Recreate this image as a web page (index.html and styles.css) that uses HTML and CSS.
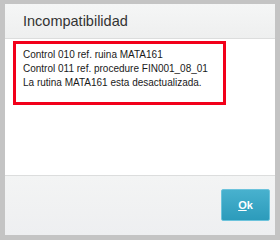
FILE: index.html
```html
<!DOCTYPE html>
<html lang="es">
<head>
  <meta charset="UTF-8" />
  <title>Incompatibilidad</title>
  <link rel="stylesheet" href="styles.css">
</head>
<body>
  <div class="dialog">
    <div class="dialog-header">
      <h1>Incompatibilidad</h1>
    </div>
    <div class="dialog-body">
      <div class="message">
        Control 010 ref. ruina MATA161<br>
        Control 011 ref. procedure FIN001_08_01<br>
        La rutina MATA161 esta desactualizada.
      </div>
    </div>
    <div class="dialog-footer">
      <button class="btn-ok"><u>O</u>k</button>
    </div>
  </div>
</body>
</html>
```

FILE: styles.css
```css
html, body {
  margin: 0;
  padding: 0;
}
body {
  font-family: "Liberation Sans", Arial, sans-serif;
  background: #fff;
}
.dialog {
  width: 280px;
  height: 240px;
  box-sizing: border-box;
  border: 5px solid #c4c4c4;
  border-top-width: 4px;
  display: flex;
  flex-direction: column;
  background: #fff;
}
.dialog-header {
  height: 35px;
  box-sizing: border-box;
  border-bottom: 1px solid #dcdddd;
  background: linear-gradient(#f5f6f6, #eeefef);
  padding-left: 18px;
  display: flex;
  align-items: center;
}
.dialog-header h1 {
  margin: 0;
  font-size: 14.5px;
  font-weight: normal;
  color: #333;
}
.dialog-body {
  flex: 1;
  padding: 2px 49px 0 8px;
}
.message {
  border: 3px solid #f2001a;
  padding: 4px 7px 12px 7px;
  font-size: 10px;
  line-height: 14px;
  color: #1a1a1a;
  white-space: nowrap;
}
.dialog-footer {
  height: 60px;
  box-sizing: border-box;
  border-top: 1px solid #dcdddd;
  background: linear-gradient(#f3f4f4, #eeeff1);
  display: flex;
  justify-content: flex-end;
  padding: 13px 5px 0 0;
}
.btn-ok {
  width: 49px;
  height: 32px;
  border: 1px solid #6cc3dc;
  border-radius: 2px;
  background: linear-gradient(#48b1ce, #2c9bbb);
  color: #fff;
  font-family: "Liberation Sans", Arial, sans-serif;
  font-size: 11px;
  font-weight: bold;
  padding: 0;
}
```
